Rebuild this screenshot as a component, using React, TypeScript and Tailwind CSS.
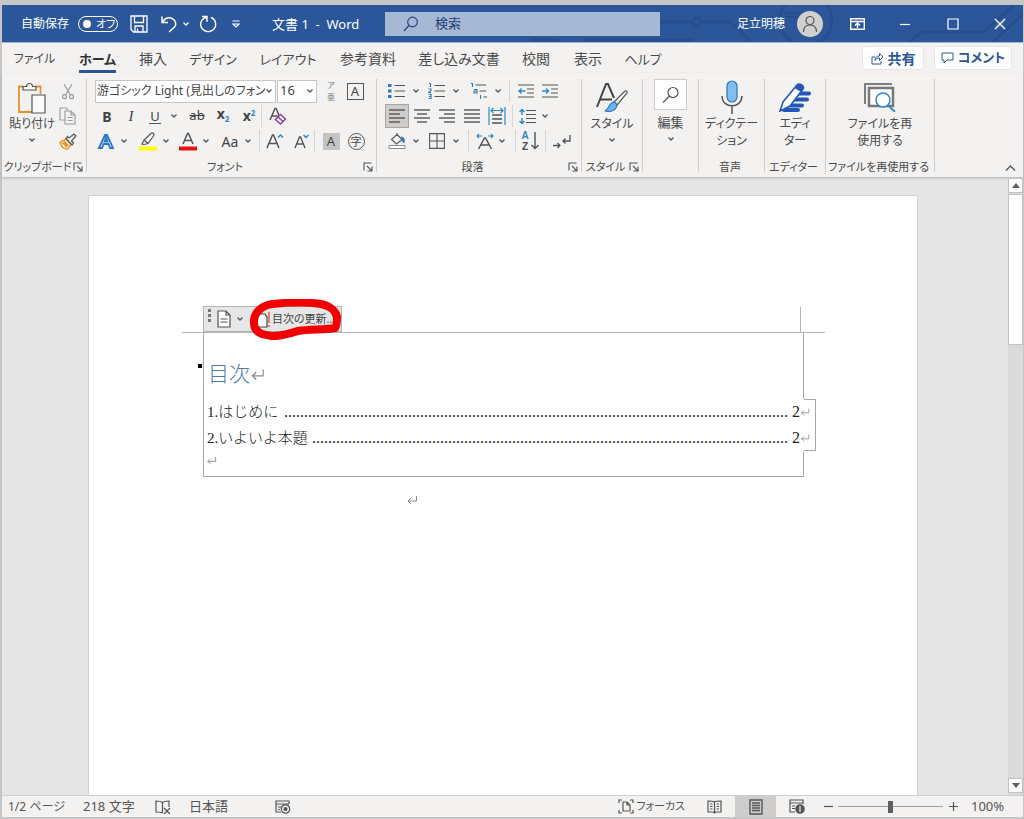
import React from 'react';

type Kids = { children?: React.ReactNode };

function Svg({ w, h, children, label }: { w: number; h: number; label?: string } & Kids) {
  return (
    <svg
      width={w}
      height={h}
      viewBox={`0 0 ${w} ${h}`}
      fill="none"
      stroke="#555555"
      strokeWidth="1.2"
      aria-hidden={label ? undefined : true}
      aria-label={label}
      className="shrink-0"
    >
      {children}
    </svg>
  );
}

function Chevron({ light = false }: { light?: boolean }) {
  return (
    <Svg w={8} h={6}>
      <path d="M1.5 1.5 4 4l2.5-2.5" stroke={light ? '#ffffff' : '#555555'} strokeWidth="1.3" />
    </Svg>
  );
}

function Tool({ label, children, className = 'w-6' }: { label: string; className?: string } & Kids) {
  return (
    <button type="button" aria-label={label} className={`flex h-6 shrink-0 items-center justify-center ${className}`}>
      {children}
    </button>
  );
}

function Drop({ label }: { label: string }) {
  return (
    <Tool label={label} className="w-[14px]">
      <Chevron />
    </Tool>
  );
}

function Rule({ className = 'ml-1' }: { className?: string }) {
  return <span className={`h-[22px] w-px shrink-0 bg-[#d8d6d4] ${className}`} />;
}

function Launcher({ label }: { label: string }) {
  return (
    <button type="button" aria-label={label} className="shrink-0">
      <Svg w={10} h={10}>
        <path d="M1 8.500V1h7.500M4 4l4.500 4.500M9 4.500V9H4.500" strokeWidth="1.1" />
      </Svg>
    </button>
  );
}

function Group({ label, width, launcher, center = false, children }: { label: string; width: string; launcher?: boolean; center?: boolean } & Kids) {
  return (
    <section aria-label={label} className={`flex h-[93px] shrink-0 flex-col border-r border-[#d0cecc] ${width}`}>
      <div className={`flex h-20 shrink-0 ${center ? 'justify-center' : ''}`}>{children}</div>
      <div className="flex h-4 shrink-0 items-center pr-[3px] text-[11px] leading-4 whitespace-nowrap">
        <span className="flex flex-1 justify-center">{label}</span>
        {launcher && <Launcher label={`${label}の設定`} />}
      </div>
    </section>
  );
}

function Lines({ rows }: { rows: [number, number][] }) {
  return (
    <Svg w={18} h={16}>
      {rows.map(([a, b], i) => (
        <path key={i} d={`M${a} ${2 + i * 4}H${b}`} strokeWidth="1.4" />
      ))}
    </Svg>
  );
}

function Return({ size = 12 }: { size?: number }) {
  return (
    <svg width={size} height={size} viewBox="0 0 12 12" fill="none" stroke="#8a8a8a" strokeWidth="1" className="shrink-0" aria-hidden>
      <path d="M10.500 2v5H2M5 4 2 7l3 3" />
    </svg>
  );
}

const tabs: [string, string][] = [
  ['ファイル', 'w-[65px] text-[12px]'],
  ['ホーム', 'w-[61px] text-[13px]'],
  ['挿入', 'w-[50px] text-[14px]'],
  ['デザイン', 'w-[70px] text-[13px]'],
  ['レイアウト', 'w-[80px] text-[13px]'],
  ['参考資料', 'w-[80px] text-[14px]'],
  ['差し込み文書', 'w-[102px] text-[14px]'],
  ['校閲', 'w-[52px] text-[14px]'],
  ['表示', 'w-[52px] text-[14px]'],
  ['ヘルプ', 'w-[58px] text-[13px]'],
];

function TitleBar() {
  return (
    <header className="relative flex h-[38px] items-center border-b border-[#9db4d6] bg-[#2b579a] text-[12px] text-white">
      <svg className="pointer-events-none absolute top-0 right-0" width="500" height="37" viewBox="0 0 500 37" fill="none" stroke="#274f8f" strokeWidth="3" aria-hidden>
        <path d="M130 17h39M179 17h29l19 19M60 35h110M386 37l13-10h62l30-27M470 37l30-28M8 35h28" />
        <circle cx="174" cy="17" r="4" />
        <circle cx="283" cy="15" r="26" />
        <path d="M262 8h16M262 12h16" strokeWidth="2" />
      </svg>
      <div className="relative flex flex-1 items-center">
        <label className="ml-[19px] flex items-center gap-[9px]">
          自動保存
          <input type="checkbox" className="sr-only" />
          <span className="flex h-4 w-10 items-center gap-[5px] rounded-full border border-white pl-1 text-[11px] leading-none">
            <span className="size-2 rounded-full bg-white" />
            オフ
          </span>
        </label>
        <button type="button" aria-label="上書き保存" className="ml-3">
          <Svg w={18} h={18}>
            <path d="M1 1h16v16H3.500L1 14.500zM4.500 1v6.500h9V1M5 17v-6h8v6M7.500 17v-3.500" stroke="#fff" strokeWidth="1.300" />
          </Svg>
        </button>
        <button type="button" aria-label="元に戻す" className="ml-3">
          <Svg w={18} h={18}>
            <path d="M2 1.500v6h6M2.500 7C5 3.500 8.500 2 12 3.500s5 5.500 2.500 8.500L9 17" stroke="#fff" strokeWidth="1.500" />
          </Svg>
        </button>
        <button type="button" aria-label="元に戻す履歴" className="ml-[3px] px-px">
          <Chevron light />
        </button>
        <button type="button" aria-label="繰り返し" className="ml-2">
          <Svg w={18} h={18}>
            <path d="M3 1.500h5V7M7.500 2.500C3.500 3 .800 7 1.800 11c1 4 5 6 8.500 5.500 4-.500 6.700-4 6.400-7.500-.200-3-2-5.500-4.700-6.500" stroke="#fff" strokeWidth="1.400" />
          </Svg>
        </button>
        <button type="button" aria-label="クイック アクセス ツール バーのカスタマイズ" className="ml-[14px]">
          <Svg w={10} h={10}>
            <path d="M1.500 2h7M2 5h6L5 8z" stroke="#fff" />
          </Svg>
        </button>
        <h1 className="ml-[31px] w-[113px] text-[13px] leading-5 whitespace-pre">文書 1  -  Word</h1>
        <label className="flex h-6 w-[275px] items-center gap-4 bg-[#a6b8d3] pl-[18px]">
          <Svg w={16} h={16} label="検索">
            <circle cx="9.500" cy="6" r="4.800" stroke="#24477f" />
            <path d="M6 9.500 1 15" stroke="#24477f" />
          </Svg>
          <input type="search" aria-label="検索" placeholder="検索" className="w-40 bg-transparent text-[13px] text-[#1e3f76] outline-none placeholder:text-[#1e3f76]" />
        </label>
      </div>
      <div className="relative flex items-center">
        <button type="button" className="flex items-center gap-3 text-[12px]">
          足立明穂
          <span className="flex size-[26px] items-center justify-center rounded-full bg-[#d2d0ce]">
            <Svg w={18} h={20}>
              <circle cx="9" cy="6.500" r="4" />
              <path d="M2.500 18c0-5 3-7 6.500-7s6.500 2 6.500 7" />
            </Svg>
          </span>
        </button>
        <button type="button" aria-label="リボンの表示オプション" className="ml-[10px] flex w-12 justify-center">
          <Svg w={15} h={12}>
            <path d="M.700.700h13.600v10.600H.700zM1 3.500h13M7.500 10V5M5 7.500 7.500 5 10 7.500" stroke="#fff" strokeWidth="1.400" />
          </Svg>
        </button>
        <button type="button" aria-label="最小化" className="flex w-12 justify-center">
          <Svg w={12} h={12}>
            <path d="M1 6.500h10" stroke="#fff" />
          </Svg>
        </button>
        <button type="button" aria-label="最大化" className="flex w-12 justify-center">
          <Svg w={12} h={12}>
            <path d="M1 1h10v10H1z" stroke="#fff" />
          </Svg>
        </button>
        <button type="button" aria-label="閉じる" className="flex w-[46px] justify-center">
          <Svg w={12} h={12}>
            <path d="m1 1 10 10M11 1 1 11" stroke="#fff" strokeWidth="1.400" />
          </Svg>
        </button>
      </div>
    </header>
  );
}

function TabBar() {
  return (
    <nav aria-label="リボン タブ" className="flex h-[30px] items-center bg-[#f3f2f1] pr-[11px] text-[13px] text-[#4a4a4a]">
      <div role="tablist" className="flex">
        {tabs.map(([name, style]) => (
          <button
            key={name}
            type="button"
            role="tab"
            aria-selected={name === 'ホーム'}
            className={`flex h-[30px] justify-center whitespace-nowrap ${style} ${name === 'ホーム' ? 'font-bold text-[#333333]' : ''}`}
          >
            <span className={`pt-[6px] pb-px leading-5 ${name === 'ホーム' ? 'border-b-[3px] border-[#2b579a]' : ''}`}>{name}</span>
          </button>
        ))}
      </div>
      <div className="ml-auto flex gap-[10px] font-bold text-[#2b579a]">
        <button type="button" className="flex h-6 w-[62px] items-center justify-center gap-1 rounded-sm border border-[#e6e4e2] bg-white text-[14px]">
          <Svg w={13} h={13}>
            <path d="M4 5H1v7h9V9M4 8.500c0-3 1.500-4.500 4.500-4.500V1.500L12 5 8.500 8.500V6C6.500 6 5 6.500 4 8.500z" stroke="#2b579a" strokeWidth="1" />
          </Svg>
          共有
        </button>
        <button type="button" className="flex h-6 w-[78px] items-center justify-center gap-1 rounded-sm border border-[#e6e4e2] bg-white whitespace-nowrap">
          <Svg w={13} h={12}>
            <path d="M1 1h11v7H6l-3 3V8H1z" stroke="#2b579a" strokeWidth="1" />
          </Svg>
          コメント
        </button>
      </div>
    </nav>
  );
}

function ClipboardGroup() {
  return (
    <Group label="クリップボード" width="w-[85px]" launcher>
      <button type="button" className="flex w-[56px] flex-col items-center pt-[3px] pl-1 text-[12px] whitespace-nowrap">
        <Svg w={30} h={33}>
          <path d="M6 4.500H2V30h13M18 4.500h5.500V12" stroke="#e8912d" strokeWidth="1.800" />
          <path d="M6 8V4.500h3.500c0-4 6-4 6 0H19V8zM15 13h13v18H15z" fill="#fafafa" />
        </Svg>
        <span className="leading-[18px]">貼り付け</span>
        <span className="mt-1">
          <Chevron />
        </span>
      </button>
      <div className="flex flex-col">
        <Tool label="切り取り" className="w-5">
          <Svg w={14} h={17}>
            <path d="M3 1l6.500 11M11 1 4.500 12" stroke="#9a9a9a" />
            <circle cx="3.500" cy="13.700" r="2" stroke="#9a9a9a" />
            <circle cx="10.500" cy="13.700" r="2" stroke="#9a9a9a" />
          </Svg>
        </Tool>
        <Tool label="コピー" className="mt-px w-5">
          <Svg w={18} h={18}>
            <path d="M6 13H1V1h6l2 2M6 4h6l4 4v9H6zM12 4v4h4M8.500 10.500h5M8.500 13.500h5" stroke="#9a9a9a" strokeWidth="1.100" />
          </Svg>
        </Tool>
        <Tool label="書式のコピー/貼り付け" className="mt-px w-5">
          <Svg w={18} h={17}>
            <path d="M1 9.500 7 6l5 5.500-3.500 4.500c-3 .500-6-2.500-7.500-6.500z" fill="#fff" stroke="#e8912d" strokeWidth="1.500" />
            <path d="M2 11c3 0 4 2 5 4l3-3-4-4z" fill="#e8912d" stroke="none" />
            <path d="M7 5.500 13 12l1.500-2-2-2L17 3l-2-2-5 4-1.500-1.500z" fill="#f3f2f1" />
          </Svg>
        </Tool>
      </div>
    </Group>
  );
}

function FontGroup() {
  return (
    <Group label="フォント" width="w-[290px]" launcher>
      <div className="flex flex-col gap-px pl-2 text-[#444444]">
        <div className="flex h-6 items-center">
          <div className="flex h-[23px] w-[181px] items-center border border-[#c8c6c4] bg-white">
            <select aria-label="フォント名" className="h-5 w-[169px] appearance-none bg-transparent pl-px text-[12px] outline-none">
              <option>游ゴシック Light (見出しのフォン</option>
            </select>
            <Chevron />
          </div>
          <div className="ml-px flex h-[23px] w-10 items-center border border-[#c8c6c4] bg-white">
            <select aria-label="フォント サイズ" className="h-5 w-7 appearance-none bg-transparent pl-[2px] text-[13px] outline-none">
              <option>16</option>
            </select>
            <Chevron />
          </div>
          <Tool label="ルビ" className="ml-[2px] w-6">
            <span className="flex flex-col items-center text-[8px] leading-[12px] text-[#777777]">
              <span>ア</span>
              <span>亜</span>
            </span>
          </Tool>
          <Tool label="囲み線">
            <span className="flex size-[17px] items-center justify-center border border-[#555555] text-[13px] leading-none">A</span>
          </Tool>
        </div>
        <div className="flex h-6 items-center">
          <Tool label="太字">
            <b className="text-[14px]">B</b>
          </Tool>
          <Tool label="斜体">
            <i className="font-['Liberation_Serif',serif] text-[15px]">I</i>
          </Tool>
          <Tool label="下線">
            <span className="border-b border-[#555555] px-px text-[13px] leading-[14px]">U</span>
          </Tool>
          <Drop label="下線の種類" />
          <Tool label="取り消し線" className="ml-1 w-6">
            <s className="text-[13px]">ab</s>
          </Tool>
          <Tool label="下付き" className="ml-[2px] w-6">
            <b className="flex text-[14px] leading-4">
              x<span className="pt-[5px] text-[8px] text-[#2b88c8]">2</span>
            </b>
          </Tool>
          <Tool label="上付き" className="ml-[2px] w-6">
            <b className="flex text-[14px] leading-4">
              x<span className="text-[8px] leading-[10px] text-[#2b88c8]">2</span>
            </b>
          </Tool>
          <Rule className="" />
          <Tool label="すべての書式をクリア" className="ml-1 w-6">
            <Svg w={18} h={18}>
              <path d="M1 13 6 1.500h1L10.500 9M3 9h6" strokeWidth="1.500" />
              <path d="m6.500 12.500 5-5 5 4.500-5 5zM9 10l5 4.500" fill="#fff" stroke="#8b3fa8" strokeWidth="1.500" />
            </Svg>
          </Tool>
        </div>
        <div className="flex h-6 items-center">
          <Tool label="文字の効果と体裁" className="w-[22px]">
            <Svg w={18} h={17}>
              <path d="M2 15 8 2h2l6 13h-3l-1.500-4h-5L5 15zM7.500 8.500h3L9 4.500z" fill="#fff" stroke="#2b78c4" strokeWidth="1.800" />
            </Svg>
          </Tool>
          <Drop label="文字の効果の種類" />
          <Tool label="蛍光ペンの色" className="ml-[6px] w-[22px]">
            <Svg w={20} h={19}>
              <path d="M4 12 6 8l7-6.500c1.500-1.500 4 .500 2.500 2.500L10 11.500l-4 1zM6 8l4 3.500" />
              <path d="M1 16.500h18" stroke="#ffff00" strokeWidth="4" />
            </Svg>
          </Tool>
          <Drop label="蛍光ペンの種類" />
          <Tool label="フォントの色" className="ml-1 w-[22px]">
            <Svg w={18} h={19}>
              <path d="M4 12 8.500 1.500h1L14 12M5.500 8.500h7" strokeWidth="1.500" />
              <path d="M0 16.500h18" stroke="#e81010" strokeWidth="4" />
            </Svg>
          </Tool>
          <Drop label="フォントの色の種類" />
          <Tool label="文字種の変換" className="ml-[6px] w-[22px]">
            <span className="text-[14px]">Aa</span>
          </Tool>
          <Drop label="文字種の種類" />
          <Rule />
          <Tool label="フォント サイズの拡大" className="ml-1 w-[22px]">
            <Svg w={18} h={16}>
              <path d="M1 15 6.500 2h1L13 15M3 10.500h8" strokeWidth="1.500" />
              <path d="m12 4.500 2.500-2.500L17 4.500" stroke="#2b88c8" strokeWidth="1.500" />
            </Svg>
          </Tool>
          <Tool label="フォント サイズの縮小" className="ml-1 w-[22px]">
            <Svg w={16} h={16}>
              <path d="M2 15 6.500 4h1L12 15M4 11h6" strokeWidth="1.400" />
              <path d="M10.500 2 13 4.500 15.500 2" stroke="#2b88c8" strokeWidth="1.500" />
            </Svg>
          </Tool>
          <Rule className="ml-[2px]" />
          <Tool label="文字の網かけ" className="ml-1 w-6">
            <span className="flex size-[17px] items-center justify-center bg-[#c6c4c2] text-[13px] leading-none">A</span>
          </Tool>
          <Tool label="囲い文字" className="ml-px w-6">
            <span className="flex size-[17px] items-center justify-center rounded-full border border-[#555555] text-[11px] leading-none">字</span>
          </Tool>
        </div>
      </div>
    </Group>
  );
}

function ParagraphGroup() {
  return (
    <Group label="段落" width="w-[205px]" launcher>
      <div className="flex flex-col gap-px pl-2">
        <div className="flex h-6 items-center">
          <Tool label="箇条書き">
            <Svg w={18} h={16}>
              <path d="M6.500 2.500H17M6.500 8H17M6.500 13.500H17" />
              <path d="M0 2.500h3.500M0 8h3.500M0 13.500h3.500" stroke="#2b78c4" strokeWidth="3" />
            </Svg>
          </Tool>
          <Drop label="箇条書きの種類" />
          <Tool label="段落番号" className="ml-[2px] w-6">
            <Svg w={18} h={18}>
              <path d="M6.500 3.500H17M6.500 9H17M6.500 14.500H17" />
              <path d="M1 1.500h1.500V5M.500 7h2.500v1.500L.500 10.500H3M.500 12.500H3v4H.500M1 14.500h2" stroke="#2b78c4" strokeWidth="1.100" />
            </Svg>
          </Tool>
          <Drop label="段落番号の種類" />
          <Tool label="アウトライン" className="ml-1 w-6">
            <Svg w={18} h={18}>
              <path d="M5.500 3H16M9.500 9H16M13.500 15H17" />
              <path d="M1 1.500h1.500V5M4 7.500h3V11H4V9h3M10.500 13v4" stroke="#2b78c4" strokeWidth="1.100" />
            </Svg>
          </Tool>
          <Drop label="アウトラインの種類" />
          <Rule />
          <Tool label="インデントを減らす" className="ml-1 w-6">
            <Svg w={16} h={16}>
              <path d="M0 2h16M9 6h7M9 10h7M0 14h16" />
              <path d="M7.500 8H1M3.500 5.500 1 8l2.500 2.500" stroke="#2b88c8" strokeWidth="1.400" />
            </Svg>
          </Tool>
          <Tool label="インデントを増やす">
            <Svg w={16} h={16}>
              <path d="M0 2h16M9 6h7M9 10h7M0 14h16" />
              <path d="M0 8h6.500M4 5.500 6.500 8 4 10.500" stroke="#2b88c8" strokeWidth="1.400" />
            </Svg>
          </Tool>
        </div>
        <div className="flex h-6 items-center gap-px">
          <Tool label="左揃え" className="w-6 border border-[#a6a4a2] bg-[#cfcdcb]">
            <Lines rows={[[1, 17], [1, 12], [1, 17], [1, 12]]} />
          </Tool>
          <Tool label="中央揃え">
            <Lines rows={[[1, 17], [4, 14], [1, 17], [4, 14]]} />
          </Tool>
          <Tool label="右揃え">
            <Lines rows={[[1, 17], [6, 17], [1, 17], [6, 17]]} />
          </Tool>
          <Tool label="両端揃え">
            <Lines rows={[[1, 17], [1, 17], [1, 17], [1, 17]]} />
          </Tool>
          <Tool label="均等割り付け">
            <Svg w={18} h={18}>
              <path d="M4 8h10M4 12h10M4 16h10" strokeWidth="1.400" />
              <path d="M1 0v18M17 0v18M3 3.500h12M5.500 1 3 3.500 5.500 6M12.500 1 15 3.500 12.500 6" stroke="#2b88c8" />
            </Svg>
          </Tool>
          <Rule className="ml-[2px]" />
          <Tool label="行と段落の間隔" className="ml-px w-6">
            <Svg w={17} h={17}>
              <path d="M7 2.500h10M7 6.500h10M7 10.500h10M7 14.500h10" />
              <path d="M3 2v5M3 10v5M.500 4 3 1.500 5.500 4M.500 13 3 15.500 5.500 13" stroke="#2b88c8" strokeWidth="1.400" />
            </Svg>
          </Tool>
          <Tool label="行間の種類" className="w-[10px]">
            <Chevron />
          </Tool>
        </div>
        <div className="flex h-6 items-center">
          <Tool label="塗りつぶし">
            <Svg w={18} h={18}>
              <path d="M9 1v3M9 2.500 14 7.500 8.500 12 3.500 7.500z" fill="#fff" />
              <path d="M13 5c3 0 3.500 3 3 5.500-1.500-1-2-2.500-2-4" fill="#2b78c4" stroke="#2b78c4" />
              <path d="M1 13.500h16v3H1z" fill="#fff" stroke="#8a8a8a" strokeWidth="1" />
            </Svg>
          </Tool>
          <Drop label="塗りつぶしの色" />
          <Tool label="罫線" className="ml-[2px] w-6">
            <Svg w={16} h={16}>
              <path d="M.600.600h14.800v14.800H.600zM8 1v14M1 8h14" strokeWidth="1.100" />
            </Svg>
          </Tool>
          <Drop label="罫線の種類" />
          <Rule className="ml-[5px]" />
          <Tool label="拡張書式" className="ml-1 w-6">
            <Svg w={18} h={17}>
              <path d="M2.500 16 8.500 5h1L15.500 16M5 12h8" strokeWidth="1.500" />
              <path d="M1 3h5M3 1 1 3l2 2M12 3h5M15 1l2 2-2 2" stroke="#2b88c8" />
            </Svg>
          </Tool>
          <Tool label="拡張書式の種類" className="w-[10px]">
            <Chevron />
          </Tool>
          <Rule className="ml-2" />
          <Tool label="並べ替え" className="ml-[2px] w-6">
            <span className="flex items-center">
              <span className="flex flex-col items-center font-['Liberation_Sans',sans-serif] text-[10px] leading-[11px] font-bold">
                <span className="text-[#2b88c8]">A</span>
                <span>Z</span>
              </span>
              <Svg w={10} h={18}>
                <path d="M6 0v16.500M2.500 13 6 16.500 9.500 13" strokeWidth="1.400" />
              </Svg>
            </span>
          </Tool>
          <Rule className="ml-[3px]" />
          <Tool label="編集記号の表示/非表示" className="ml-1 w-6">
            <Svg w={18} h={17}>
              <path d="M17 2v6h-7M12.500 5.500 10 8l2.500 2.500M0 12.500h7M4.500 10 7 12.500 4.500 15" strokeWidth="1.300" />
            </Svg>
          </Tool>
        </div>
      </div>
    </Group>
  );
}

function BigButton({ lines, drop, children }: { lines: string[]; drop?: boolean } & Kids) {
  return (
    <button type="button" className="flex flex-col items-center self-start text-[12px] leading-[17px] whitespace-nowrap">
      <span className="flex h-9 items-center justify-center">{children}</span>
      {lines.map((line) => (
        <span key={line}>{line}</span>
      ))}
      {drop && (
        <span className="mt-[5px]">
          <Chevron />
        </span>
      )}
    </button>
  );
}

function Ribbon() {
  return (
    <div className="flex items-start border-b border-[#c6c6c6] bg-[#f3f2f1] pt-[6px] pb-[5px] text-[#4a4a4a] shadow-sm">
      <ClipboardGroup />
      <FontGroup />
      <ParagraphGroup />
      <Group label="スタイル" width="w-[61px]" launcher center>
        <BigButton lines={['スタイル']} drop>
          <Svg w={32} h={32}>
            <path d="M1 26 10 3h2l6 14M4.500 18.500H16" stroke="#444444" strokeWidth="2" />
            <path d="M18 21 28 11c2-2 4-1 3 1L21 24z" fill="#fff" />
            <path d="M9 30c4-1 3-7 8-9 3 0 5 3 3 6-3 4-7 4-11 3z" fill="#6db3ea" stroke="#2b78c4" />
          </Svg>
        </BigButton>
      </Group>
      <section aria-label="編集" className="flex h-[93px] w-[56px] shrink-0 justify-center border-r border-[#d0cecc]">
        <button type="button" className="flex flex-col items-center self-start text-[13px] leading-[17px]">
          <span className="mb-1 flex h-[31px] w-[33px] items-center justify-center border border-[#d0cecc] bg-white">
            <Svg w={18} h={18}>
              <circle cx="11" cy="6.500" r="5" />
              <path d="m7.500 10-6.500 6.500" />
            </Svg>
          </span>
          編集
          <span className="mt-[5px]">
            <Chevron />
          </span>
        </button>
      </section>
      <Group label="音声" width="w-[66px]" center>
        <BigButton lines={['ディクテー', 'ション']}>
          <Svg w={24} h={34}>
            <rect x="7" y="1" width="10" height="21" rx="5" fill="#83beec" stroke="#2b78c4" />
            <path d="M2 16c0 13 20 13 20 0M12 26v8" strokeWidth="1.500" />
          </Svg>
        </BigButton>
      </Group>
      <Group label="エディター" width="w-[61px]" center>
        <BigButton lines={['エディ', 'ター']}>
          <Svg w={32} h={30}>
            <path d="M20 11.500h10M16 17.500h12M11 23.500h12M5 28h14" stroke="#2358b8" strokeWidth="4" strokeLinecap="round" />
            <path d="M1 29 4 20 18 3c2-3 8 1 6 4L11 24z" fill="#fff" stroke="#2358b8" strokeWidth="1.600" />
            <path d="M15.500 6 18 3c2-3 8 1 6 4l-2 3z" fill="#2358b8" stroke="none" />
          </Svg>
        </BigButton>
      </Group>
      <Group label="ファイルを再使用する" width="w-[109px]" center>
        <BigButton lines={['ファイルを再', '使用する']}>
          <Svg w={33} h={30}>
            <path d="M2 22V2h27" strokeWidth="1.500" />
            <path d="M6 6h24v18H6z" fill="#fff" stroke="#777777" strokeWidth="2.500" />
            <circle cx="20" cy="18" r="7" fill="#fff" stroke="#2b88c8" strokeWidth="1.500" />
            <path d="m25 23 7 7" stroke="#2b88c8" strokeWidth="1.800" />
          </Svg>
        </BigButton>
      </Group>
      <button type="button" aria-label="リボンを折りたたむ" className="mr-[7px] ml-auto self-end">
        <Svg w={11} h={8}>
          <path d="m1 6.500 4.500-4.500L10 6.500" strokeWidth="1.400" />
        </Svg>
      </button>
    </div>
  );
}

function TocEntry({ title, dots }: { title: string; dots: number }) {
  return (
    <a href="#toc" className="-mr-3 flex h-[26px] items-center pl-[3px] text-[15px] leading-[26px] whitespace-nowrap">
      <span className="shrink-0">{title}</span>
      <span className="flex-1 text-right text-[16px]">{'.'.repeat(dots)}</span>
      <span className="ml-1 flex w-6 items-center text-[16px]">
        2<Return size={10} />
      </span>
    </a>
  );
}

function DocumentPage() {
  return (
    <main className="min-w-0 flex-1 border-x border-t border-[#d2d2d2] bg-white pt-[111px] pr-[92px] pl-[93px]">
      <div className="relative flex h-[26px] items-end justify-between border-b border-[#b4b4b4] pr-6 pl-[21px]">
        <div className="flex h-[26px] w-[139px] items-center border border-[#b4b4b4] bg-[#e6e6e6] text-[#444444]">
          <span className="flex flex-col gap-[2px] self-start pt-[2px] pl-1">
            <span className="size-[3px] bg-[#777777]" />
            <span className="size-[3px] bg-[#777777]" />
            <span className="size-[3px] bg-[#777777]" />
          </span>
          <button type="button" aria-label="目次" className="ml-[6px] flex items-center gap-[5px]">
            <Svg w={14} h={18}>
              <path d="M1 1h8l4 4v12H1zM9 1v4h4M3.500 9h7M3.500 12h7" fill="#fff" />
            </Svg>
            <Chevron />
          </button>
          <button type="button" className="ml-[10px] flex items-center gap-[2px] text-[11px] leading-4 whitespace-nowrap">
            <Svg w={16} h={18}>
              <path d="M1 17V1h4v3h6l2 3v10z" fill="#fff" stroke="#444444" />
              <path d="M15 2v11M15 15v2" stroke="#e04040" />
            </Svg>
            目次の更新...
          </button>
        </div>
        <span className="h-[25px] w-px bg-[#b4b4b4]" />
        <svg className="pointer-events-none absolute -top-2 left-[66px]" width="100" height="46" viewBox="0 0 100 46" fill="none" stroke="#f00000" strokeWidth="8" strokeLinejoin="round" strokeLinecap="round" aria-hidden>
          <path d="M6 25C5 15 12 7 24 5c20-2 36-2 49 0 9 2 15 7 16 13 0 4 0 8-2 11-12 2-26 1-37 3-8 2-15 5-26 5-9-1-17-3-18-12z" />
        </svg>
      </div>
      <section id="toc" className="relative mr-[21px] ml-[21px] font-['Liberation_Serif','Noto_Sans_CJK_JP',serif] font-light text-[#222222] [font-feature-settings:normal]">
        <span className="absolute top-[31px] -left-[5px] size-1 bg-black" />
        <div className="h-[66px] border-x border-[#a6a6a6] pt-[25px] pl-1">
          <h2 className="flex items-center text-[21px] leading-8 text-[#5079ae]">
            目次
            <Return size={15} />
          </h2>
        </div>
        <div className="-mr-3 flex">
          <div className="min-w-0 flex-1 border-l border-[#a6a6a6]">
            <TocEntry title="1.はじめに" dots={126} />
            <TocEntry title="2.いよいよ本題" dots={119} />
          </div>
          <span className="w-3 border-y border-r border-[#a6a6a6]" />
        </div>
        <div className="h-[26px] border-x border-b border-[#a6a6a6] pt-1 pl-[2px]">
          <Return size={11} />
        </div>
      </section>
      <div className="mt-[17px] ml-[224px]">
        <Return />
      </div>
    </main>
  );
}

function ScrollBar() {
  return (
    <div className="flex w-[15px] shrink-0 flex-col bg-[#dadada]">
      <button type="button" aria-label="上へスクロール" className="flex h-[15px] items-center justify-center border border-[#c2c2c2] bg-white">
        <svg width="8" height="5" viewBox="0 0 8 5" fill="#606060" aria-hidden>
          <path d="M4 0 8 5H0z" />
        </svg>
      </button>
      <span className="mt-px h-[151px] border border-[#c2c2c2] bg-white" />
      <button type="button" aria-label="下へスクロール" className="mt-auto mb-[2px] flex h-[15px] items-center justify-center border border-[#c2c2c2] bg-white">
        <svg width="8" height="5" viewBox="0 0 8 5" fill="#606060" aria-hidden>
          <path d="M0 0h8L4 5z" />
        </svg>
      </button>
    </div>
  );
}

function StatusBar() {
  return (
    <footer className="flex h-[22px] items-center border-t border-[#d0cecc] bg-[#f3f2f1] pl-[6px] text-[12px] whitespace-nowrap text-[#555555]">
      <button type="button" className="w-[75px] text-left">1/2 ページ</button>
      <button type="button" className="w-[72px] text-left text-[13px]">218 文字</button>
      <button type="button" aria-label="校正" className="w-[34px]">
        <Svg w={16} h={14}>
          <path d="M7.500 2.500C6 1.200 3 1 1 1v11c2 0 5 0 6.500 1M7.500 13V2.500C9 1.200 12 1 14 1v6M9 8l6 6M15 8l-6 6" />
        </Svg>
      </button>
      <button type="button" className="w-[86px] text-left text-[13px]">日本語</button>
      <button type="button" aria-label="マクロの記録">
        <Svg w={16} h={14}>
          <path d="M6 12H1V1h13v3M1 4h13M3 7h3M3 9.500h2" />
          <circle cx="10.500" cy="9" r="4.200" />
          <circle cx="10.500" cy="9" r="1.500" fill="#555555" />
        </Svg>
      </button>
      <div className="ml-auto flex h-full items-center">
        <button type="button" className="mr-2 flex items-center gap-[2px] text-[11px]">
          <Svg w={16} h={15}>
            <path d="M1 4V1h3M12 1h3v3M1 11v3h3M12 14h3v-3M5 3h4l3 3v6H5zM9 3v3h3" />
          </Svg>
          フォーカス
        </button>
        <button type="button" aria-label="閲覧モード" className="flex h-full w-[42px] items-center justify-center">
          <Svg w={15} h={14}>
            <path d="M7.500 2C6 1 3 1 1 1v11h5l1.500 1M7.500 13V2C9 1 12 1 14 1v11H9l-1.500 1M3 4h2.500M3 6.500h2.500M3 9h2.500M9.500 4H12M9.500 6.500H12M9.500 9H12" />
          </Svg>
        </button>
        <button type="button" aria-label="印刷レイアウト" className="flex h-full w-[41px] items-center justify-center bg-[#cfcdcb]">
          <Svg w={14} h={16}>
            <path d="M1 1h12v14H1zM3 4h8M3 6.500h8M3 9h8M3 11.500h8" strokeWidth="1.400" />
          </Svg>
        </button>
        <button type="button" aria-label="Web レイアウト" className="flex h-full w-[42px] items-center justify-center">
          <Svg w={16} h={15}>
            <path d="M6 13H1V1h13v4M1 4h13M3 7h3M3 9.500h3" />
            <circle cx="11" cy="10" r="4.200" fill="#555555" />
            <path d="M11 7v6" stroke="#f3f2f1" />
          </Svg>
        </button>
        <button type="button" aria-label="縮小" className="flex w-5 justify-center">
          <Svg w={9} h={9}>
            <path d="M0 4.500h9" />
          </Svg>
        </button>
        <input
          type="range"
          aria-label="ズーム"
          defaultValue={50}
          className="h-3 w-[105px] appearance-none bg-[linear-gradient(#a0a0a0,#a0a0a0)] bg-[length:100%_1px] bg-center bg-no-repeat [&::-webkit-slider-thumb]:h-3 [&::-webkit-slider-thumb]:w-[5px] [&::-webkit-slider-thumb]:appearance-none [&::-webkit-slider-thumb]:bg-[#606060]"
        />
        <button type="button" aria-label="拡大" className="flex w-5 justify-center">
          <Svg w={9} h={9}>
            <path d="M0 4.500h9M4.500 0v9" />
          </Svg>
        </button>
        <button type="button" className="w-[60px] pl-2 text-left text-[13px]">100%</button>
      </div>
    </footer>
  );
}

export default function App() {
  return (
    <div className="flex min-h-screen flex-col border-t-[5px] border-r border-b-2 border-l-2 border-[#c6c6c6] bg-[#e6e6e6] font-['Noto_Sans','Noto_Sans_CJK_JP',sans-serif] [font-feature-settings:'palt']">
      <TitleBar />
      <TabBar />
      <Ribbon />
      <div className="flex flex-1">
        <div className="flex min-w-0 flex-1 pt-[17px] pr-[90px] pl-[86px]">
          <DocumentPage />
        </div>
        <ScrollBar />
      </div>
      <StatusBar />
    </div>
  );
}
